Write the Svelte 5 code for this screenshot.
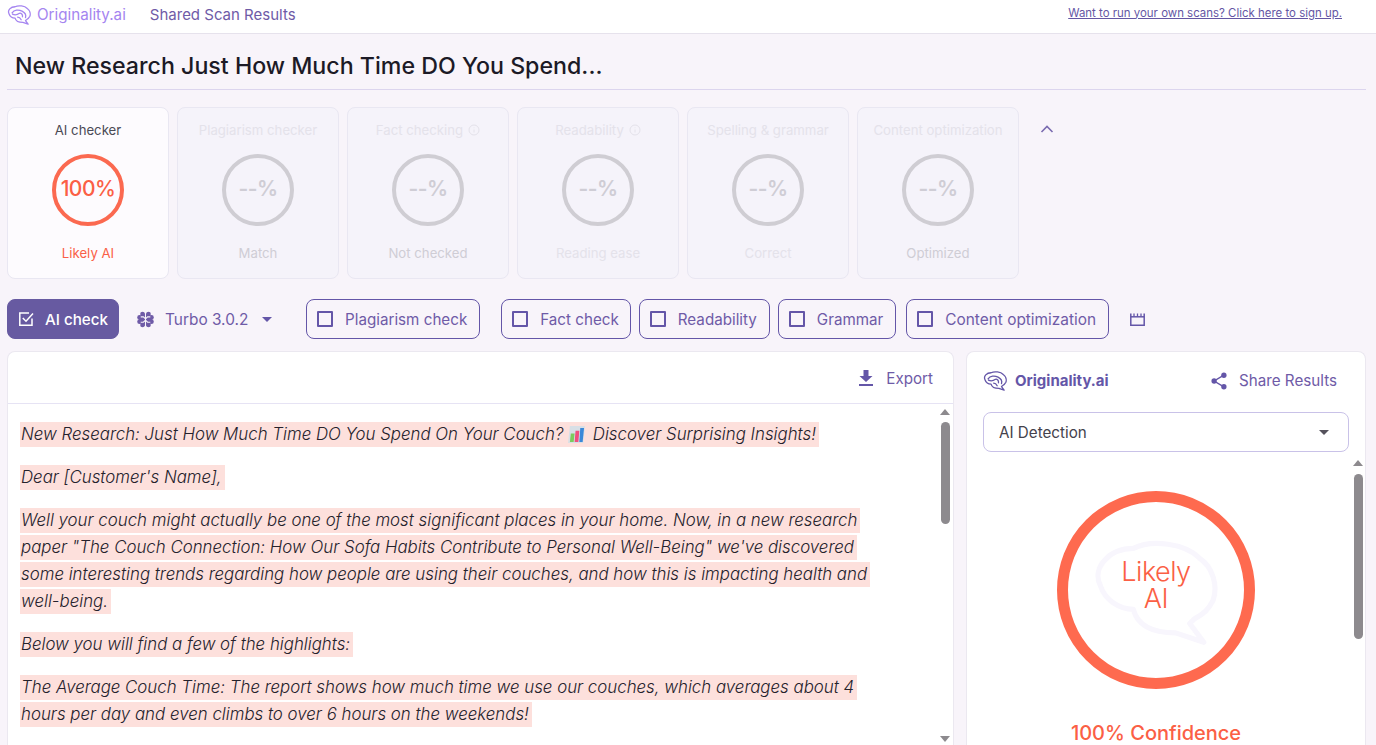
<script>
  const cards = [
    { title: 'AI checker', value: '100%', label: 'Likely AI', active: true },
    { title: 'Plagiarism checker', value: '--%', label: 'Match' },
    { title: 'Fact checking', value: '--%', label: 'Not checked', info: true },
    { title: 'Readability', value: '--%', label: 'Reading ease', info: true, faint: true },
    { title: 'Spelling & grammar', value: '--%', label: 'Correct', faint: true },
    { title: 'Content optimization', value: '--%', label: 'Optimized' }
  ];

  const paragraphs = [
    'Dear [Customer\'s Name],',
    'Well your couch might actually be one of the most significant places in your home. Now, in a new research paper "The Couch Connection: How Our Sofa Habits Contribute to Personal Well-Being" we\'ve discovered some interesting trends regarding how people are using their couches, and how this is impacting health and well-being.',
    'Below you will find a few of the highlights:',
    'The Average Couch Time: The report shows how much time we use our couches, which averages about 4 hours per day and even climbs to over 6 hours on the weekends!'
  ];

  const brainOutline = 'M3 10C1 6 5 2 10 2C14 0 21 1 24 4C27 6 28 10 27 13C26 15 25 16 23 17L22 18L25 22L19 20C15 20 11 19 10 15C7 15 4 13 3 10Z';
  const brainLines = 'M6.5 9C9 5.5 14 5 18 7C21 8.5 23 11 22 14.5M7 10.5C10 12 13 11 15 9.5C17 9 19 11 18.5 13.5M13 14C15 14 16 15 17 17';
</script>

{#snippet brainIcon(cls)}
  <svg class={cls} viewBox="1 0 27 23" fill="none" stroke="currentColor" stroke-width="1.5" stroke-linecap="round" stroke-linejoin="round">
    <path d={brainOutline} />
    <path d={brainLines} />
  </svg>
{/snippet}

{#snippet checkbox()}
  <span class="box"></span>
{/snippet}

<div class="page">
  <header class="topbar">
    <div class="brand">
      {@render brainIcon('logo')}
      <span class="brand-name">Originality.ai</span>
    </div>
    <span class="shared">Shared Scan Results</span>
    <a class="signup" href="#top">Want to run your own scans? Click here to sign up.</a>
  </header>

  <main class="content">
    <h1>New Research Just How Much Time DO You Spend...</h1>

    <section class="cards">
      {#each cards as card}
        <div class="card" class:active={card.active} class:faint={card.faint}>
          <div class="card-title">
            {card.title}
            {#if card.info}
              <svg class="info" viewBox="0 0 12 12" fill="none" stroke="currentColor">
                <circle cx="6" cy="6" r="5" />
                <path d="M6 5.5V8.5M6 3.5V4.2" />
              </svg>
            {/if}
          </div>
          <div class="ring">{card.value}</div>
          <div class="card-label">{card.label}</div>
        </div>
      {/each}
      <svg class="chevron" viewBox="0 0 14 8" fill="none" stroke="currentColor" stroke-width="1.6">
        <path d="M1.5 7L7 1.5L12.5 7" />
      </svg>
    </section>

    <section class="actions">
      <button class="btn primary">
        <svg class="check" viewBox="0 0 16 16" fill="none" stroke="currentColor" stroke-width="1.5">
          <path d="M14 7.5V14.2H1.8V2H11" />
          <path d="M4.8 7L8 10.2L15 2.6" />
        </svg>
        AI check
      </button>
      <div class="model">
        <svg class="chip" viewBox="0 0 16 16">
          <g fill="currentColor">
            <circle cx="8" cy="8" r="6" />
            <circle cx="5.2" cy="2.8" r="2.2" />
            <circle cx="10.8" cy="2.8" r="2.2" />
            <circle cx="2.4" cy="6" r="2.2" />
            <circle cx="13.6" cy="6" r="2.2" />
            <circle cx="2.4" cy="10" r="2.2" />
            <circle cx="13.6" cy="10" r="2.2" />
            <circle cx="5.2" cy="13.2" r="2.2" />
            <circle cx="10.8" cy="13.2" r="2.2" />
          </g>
          <path fill="none" stroke="#f8f4fa" stroke-width="1" d="M8 1.5V14.5M3.5 5.5H6L8 7.5M12.5 5.5H10L8 7.5M3.5 10.5H6L8 8.5M12.5 10.5H10L8 8.5" />
        </svg>
        <span>Turbo 3.0.2</span>
        <span class="caret"></span>
      </div>
      <button class="btn plagiarism">{@render checkbox()}Plagiarism check</button>
      <button class="btn fact">{@render checkbox()}Fact check</button>
      <button class="btn">{@render checkbox()}Readability</button>
      <button class="btn">{@render checkbox()}Grammar</button>
      <button class="btn optimization">{@render checkbox()}Content optimization</button>
      <svg class="clapper" viewBox="0 0 15 13" fill="none" stroke="currentColor" stroke-width="1.5">
        <path d="M.8 .5V12.2H14.2V.5" />
        <path d="M.8 3.8H14.2" />
        <path d="M4 .5V3.5M7.5 .5V3.5M11 .5V3.5" stroke-width="1.3" />
      </svg>
    </section>

    <section class="panels">
      <article class="panel doc">
        <div class="doc-head">
          <svg class="download" viewBox="0 0 14 16" fill="currentColor">
            <path d="M4.5 0H9.5V6H13.5L7 12L.5 6H4.5ZM0 14H14V16H0Z" />
          </svg>
          <span>Export</span>
        </div>
        <div class="doc-body">
          <div class="doc-text">
            <p><mark>New Research: Just How Much Time DO You Spend On Your Couch?
              <svg class="emoji" viewBox="0 0 18 18">
                <path d="M2 0H18L16 18H0Z" fill="#d8dfe6" />
                <path d="M3 8H7L6 17H2Z" fill="#7ccb5e" />
                <path d="M8 5H12L11 17H7Z" fill="#ef4f7f" />
                <path d="M13 2H17L15.5 17H12Z" fill="#3b88d8" />
              </svg>
              Discover Surprising Insights!</mark></p>
            {#each paragraphs as text}
              <p><mark>{text}</mark></p>
            {/each}
          </div>
          <div class="scroll">
            <span class="arrow up"></span>
            <span class="thumb"></span>
            <span class="arrow down"></span>
          </div>
        </div>
      </article>

      <aside class="panel side">
        <div class="side-head">
          <div class="side-brand">
            {@render brainIcon('side-logo')}
            <strong>Originality.ai</strong>
          </div>
          <div class="share">
            <svg viewBox="0 0 18 20" fill="currentColor">
              <circle cx="14.5" cy="3.5" r="3" />
              <circle cx="3.5" cy="10" r="3" />
              <circle cx="14.5" cy="16.5" r="3" />
              <path d="M14.5 3.5L3.5 10L14.5 16.5" fill="none" stroke="currentColor" stroke-width="1.6" />
            </svg>
            Share Results
          </div>
        </div>
        <div class="select">
          <span>AI Detection</span>
          <span class="select-caret"></span>
        </div>
        <div class="side-body">
          <div class="result">
            <div class="big-ring">
              <svg class="ghost" viewBox="1 0 27 23" fill="none" stroke="currentColor" stroke-width="1.1" stroke-linejoin="round">
                <path d={brainOutline} />
              </svg>
              <span class="verdict">Likely<br />AI</span>
            </div>
            <div class="confidence">100% Confidence</div>
          </div>
          <div class="scroll side-scroll">
            <span class="arrow up"></span>
            <span class="thumb"></span>
          </div>
        </div>
      </aside>
    </section>
  </main>
</div>

<style>
  :global(body) {
    margin: 0;
    background: #f8f4fa;
    font-family: 'Inter', 'Liberation Sans', sans-serif;
    overflow: hidden;
  }

  .page {
    height: 745px;
    overflow: hidden;
  }

  .topbar {
    display: flex;
    align-items: center;
    height: 34px;
    padding: 0 34px 4px 7px;
    box-sizing: border-box;
    background: #fff;
    border-bottom: 1px solid #e6e2ec;
  }

  .brand {
    display: flex;
    align-items: center;
    gap: 6px;
    color: #a585f0;
  }

  .logo {
    width: 24px;
    height: 20px;
  }

  .brand-name {
    font-size: 15.2px;
  }

  .shared {
    margin-left: 24px;
    font-size: 15px;
    color: #6f5ba7;
  }

  .signup {
    margin: 0 0 4px auto;
    font-size: 11.45px;
    color: #6456a4;
  }

  .content {
    padding: 0 10px 0 7px;
  }

  h1 {
    margin: 0;
    height: 56px;
    padding: 17px 0 0 8px;
    box-sizing: border-box;
    font-size: 23.2px;
    line-height: 30px;
    font-weight: 500;
    color: #1c1a26;
    border-bottom: 1px solid #dcd5ee;
  }

  .cards {
    display: flex;
    align-items: flex-start;
    gap: 8px;
    margin-top: 17px;
  }

  .card {
    display: flex;
    flex-direction: column;
    align-items: center;
    width: 162px;
    height: 172px;
    padding-top: 14px;
    box-sizing: border-box;
    background: #f5f3fa;
    border: 1px solid #e9e7f2;
    border-radius: 8px;
    color: #cfcdd5;
  }

  .card.active {
    background: #fdfbfe;
    color: #fa5f47;
  }

  .card-title {
    display: flex;
    align-items: center;
    gap: 5px;
    height: 16px;
    font-size: 13.2px;
    color: #e4e2ea;
  }

  .active .card-title {
    color: #4a4a55;
  }

  .card.faint .card-label {
    color: #e4e2ea;
  }

  .info {
    width: 12px;
    height: 12px;
  }

  .ring {
    display: flex;
    align-items: center;
    justify-content: center;
    width: 72px;
    height: 72px;
    margin-top: 16px;
    padding-bottom: 3px;
    box-sizing: border-box;
    border: 4px solid #cfcdd3;
    border-radius: 50%;
    font-size: 21px;
    font-weight: 600;
    letter-spacing: -0.5px;
    white-space: nowrap;
  }

  .active .ring {
    border-color: #fb6950;
    color: #fb5f45;
    font-weight: 500;
  }

  .card-label {
    margin-top: 19px;
    font-size: 13.2px;
  }

  .chevron {
    width: 14px;
    height: 8px;
    margin: 18px 0 0 13px;
    color: #7a6bb0;
  }

  .actions {
    display: flex;
    align-items: center;
    gap: 8px;
    margin-top: 20px;
  }

  .btn {
    display: flex;
    align-items: center;
    gap: 12px;
    height: 40px;
    padding: 0 12px 0 10px;
    box-sizing: border-box;
    background: transparent;
    border: 1px solid #6456a8;
    border-radius: 8px;
    font: inherit;
    font-size: 15.2px;
    color: #6f5ba7;
    white-space: nowrap;
  }

  .primary {
    gap: 11px;
    padding: 0 10px;
    background: #675aa1;
    border-color: #675aa1;
    color: #fff;
    font-weight: 500;
  }

  .check {
    width: 16px;
    height: 16px;
  }

  .box {
    width: 12px;
    height: 12px;
    border: 2px solid #6456a8;
    border-radius: 1px;
  }

  .model {
    display: flex;
    align-items: center;
    width: 171px;
    padding-left: 10px;
    box-sizing: border-box;
    font-size: 15.4px;
    color: #6f5ba7;
  }

  .chip {
    width: 17px;
    height: 17px;
    margin-right: 11px;
  }

  .caret {
    margin-left: 14px;
    border: 5px solid transparent;
    border-top-color: #6456a8;
    border-bottom: 0;
  }

  .plagiarism {
    margin-right: 13px;
  }

  .fact {
    padding-right: 11px;
  }

  .optimization {
    margin-left: 2px;
    font-size: 15.4px;
  }

  .clapper {
    width: 15px;
    height: 13px;
    margin-left: 13px;
    color: #6456a8;
  }

  .panels {
    display: flex;
    gap: 12px;
    margin-top: 12px;
  }

  .panel {
    height: 420px;
    box-sizing: border-box;
    background: #fff;
    border: 1px solid #ebe8f0;
    border-bottom: 0;
    border-radius: 8px 8px 0 0;
  }

  .doc {
    width: 947px;
  }

  .doc-head {
    display: flex;
    align-items: center;
    justify-content: flex-end;
    gap: 13px;
    height: 52px;
    padding: 1px 20px 0 0;
    box-sizing: border-box;
    border-bottom: 1px solid #e6e3f4;
    font-size: 15.2px;
    color: #6f5ba7;
  }

  .download {
    width: 14px;
    height: 16px;
    color: #6456a8;
  }

  .doc-body {
    display: flex;
    height: 342px;
    overflow: hidden;
  }

  .doc-text {
    flex: 1;
    padding: 17px 55px 0 12px;
    font-size: 16.85px;
    line-height: 27px;
    font-style: italic;
    font-weight: 300;
    color: #25222c;
  }

  p {
    margin: 0 0 16px;
  }

  mark {
    padding: 2px 3px 3px 1px;
    background: #fde0dc;
    color: inherit;
    -webkit-box-decoration-break: clone;
    box-decoration-break: clone;
  }

  .emoji {
    width: 17px;
    height: 17px;
    margin-right: 3px;
    vertical-align: -3px;
  }

  .scroll {
    display: flex;
    flex-direction: column;
    align-items: center;
    width: 10px;
    margin: 5px 3px 0 0;
  }

  .arrow {
    border: 5px solid transparent;
  }

  .arrow.up {
    border-top: 0;
    border-bottom: 6px solid #8d8a8e;
  }

  .arrow.down {
    margin-top: 212px;
    border-bottom: 0;
    border-top: 6px solid #8d8a8e;
  }

  .thumb {
    width: 9px;
    height: 102px;
    margin-top: 7px;
    background: #8d8a8e;
    border-radius: 5px;
  }

  .side {
    width: 400px;
    padding: 0 0 0 16px;
  }

  .side-head {
    display: flex;
    align-items: center;
    justify-content: space-between;
    height: 60px;
    padding: 0 28px 3px 0;
    box-sizing: border-box;
  }

  .side-brand {
    display: flex;
    align-items: center;
    gap: 8px;
    color: #6456a8;
  }

  .side-logo {
    width: 24px;
    height: 20px;
  }

  .side-brand strong {
    font-size: 15px;
    font-weight: 700;
  }

  .share {
    display: flex;
    align-items: center;
    gap: 12px;
    font-size: 15.2px;
    color: #6f5ba7;
  }

  .share svg {
    width: 16px;
    height: 18px;
    color: #6456a8;
  }

  .select {
    display: flex;
    align-items: center;
    justify-content: space-between;
    width: 366px;
    height: 40px;
    padding: 0 19px 0 15px;
    box-sizing: border-box;
    border: 1px solid #c9c2e8;
    border-radius: 8px;
    font-size: 15.2px;
    color: #44424c;
  }

  .select-caret {
    border: 5px solid transparent;
    border-top-color: #55525c;
    border-bottom: 0;
  }

  .side-body {
    display: flex;
    height: 320px;
  }

  .result {
    display: flex;
    flex-direction: column;
    align-items: center;
    width: 346px;
    padding-top: 39px;
  }

  .big-ring {
    position: relative;
    display: flex;
    align-items: center;
    justify-content: center;
    width: 198px;
    height: 198px;
    box-sizing: border-box;
    border: 11px solid #fe6a4f;
    border-radius: 50%;
    font-size: 27px;
    line-height: 27px;
    font-weight: 300;
    letter-spacing: -0.5px;
    text-align: center;
    color: #fb5f45;
  }

  .ghost {
    position: absolute;
    left: 19px;
    top: 37px;
    width: 135px;
    height: 108px;
    color: #f8f6fd;
  }

  .verdict {
    position: relative;
    margin-bottom: 10px;
  }

  .confidence {
    margin-top: 32px;
    font-size: 20px;
    font-weight: 500;
    color: #fb5f45;
  }

  .side-scroll {
    margin: 8px 0 0 24px;
  }

  .side-scroll .thumb {
    height: 165px;
    margin-top: 8px;
  }
</style>
